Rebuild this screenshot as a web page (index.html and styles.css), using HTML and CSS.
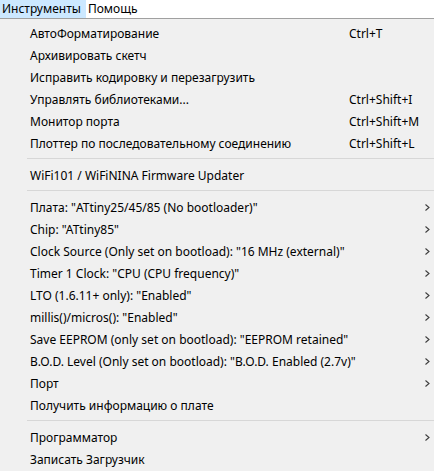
FILE: index.html
```html
<!DOCTYPE html>
<html lang="ru">
<head>
  <meta charset="UTF-8">
  <title>Инструменты</title>
  <link rel="stylesheet" href="styles.css">
</head>
<body>
  <div class="menubar">
    <span class="menubar-item active">Инструменты</span>
    <span class="menubar-item">Помощь</span>
  </div>

  <div class="menu">
    <div class="item"><span>АвтоФорматирование</span><span class="key">Ctrl+T</span></div>
    <div class="item"><span>Архивировать скетч</span></div>
    <div class="item"><span>Исправить кодировку и перезагрузить</span></div>
    <div class="item"><span>Управлять библиотеками...</span><span class="key">Ctrl+Shift+I</span></div>
    <div class="item"><span>Монитор порта</span><span class="key">Ctrl+Shift+M</span></div>
    <div class="item"><span>Плоттер по последовательному соединению</span><span class="key">Ctrl+Shift+L</span></div>
    <div class="sep"></div>
    <div class="item"><span>WiFi101 / WiFiNINA Firmware Updater</span></div>
    <div class="sep"></div>
    <div class="item sub"><span>Плата: "ATtiny25/45/85 (No bootloader)"</span></div>
    <div class="item sub"><span>Chip: "ATtiny85"</span></div>
    <div class="item sub"><span>Clock Source (Only set on bootload): "16 MHz (external)"</span></div>
    <div class="item sub"><span>Timer 1 Clock: "CPU (CPU frequency)"</span></div>
    <div class="item sub"><span>LTO (1.6.11+ only): "Enabled"</span></div>
    <div class="item sub"><span>millis()/micros(): "Enabled"</span></div>
    <div class="item sub"><span>Save EEPROM (only set on bootload): "EEPROM retained"</span></div>
    <div class="item sub"><span>B.O.D. Level (Only set on bootload): "B.O.D. Enabled (2.7v)"</span></div>
    <div class="item sub"><span>Порт</span></div>
    <div class="item"><span>Получить информацию о плате</span></div>
    <div class="sep"></div>
    <div class="item sub"><span>Программатор</span></div>
    <div class="item"><span>Записать Загрузчик</span></div>
  </div>

  <script>
    // submenu arrows
    document.querySelectorAll('.item.sub').forEach(function (row) {
      let arrow = document.createElement('span');
      arrow.className = 'arrow';
      arrow.innerHTML = '<svg width="5" height="7" viewBox="0 0 5 7"><path d="M0.5 0.5 L4 3.5 L0.5 6.5" fill="none" stroke="#3c3c3c" stroke-width="1.1"/></svg>';
      row.appendChild(arrow);
    });
  </script>
</body>
</html>
```

FILE: styles.css
```css
body {
  margin: 0;
  font-family: "Noto Sans", "DejaVu Sans", sans-serif;
  font-size: 12px;
  color: #000;
  background-color: #f0f0f0;
  overflow: hidden;
}

.menubar {
  display: flex;
  height: 18px;
  background-color: #fff;
  border-bottom: 1px solid #a0a0a0;
}

.menubar-item {
  line-height: 16px;
  padding: 0 3px 0 1px;
  border: 1px solid transparent;
}

.menubar-item.active {
  background-color: #cce8ff;
  border-color: #cce8ff;
  padding-right: 4px;
}

.menu {
  padding-top: 3px;
}

.item {
  display: grid;
  grid-template-columns: minmax(0, 1fr) 72px 13px;
  align-items: center;
  height: 22px;
  padding-left: 30px;
  white-space: nowrap;
}

.item .key {
  grid-column: 2;
}

.item .arrow {
  grid-column: 3;
  display: flex;
  align-items: center;
  padding-left: 4px;
}

.sep {
  height: 1px;
  margin: 4px 0 5px 27px;
  background-color: #d7d7d7;
}
```
